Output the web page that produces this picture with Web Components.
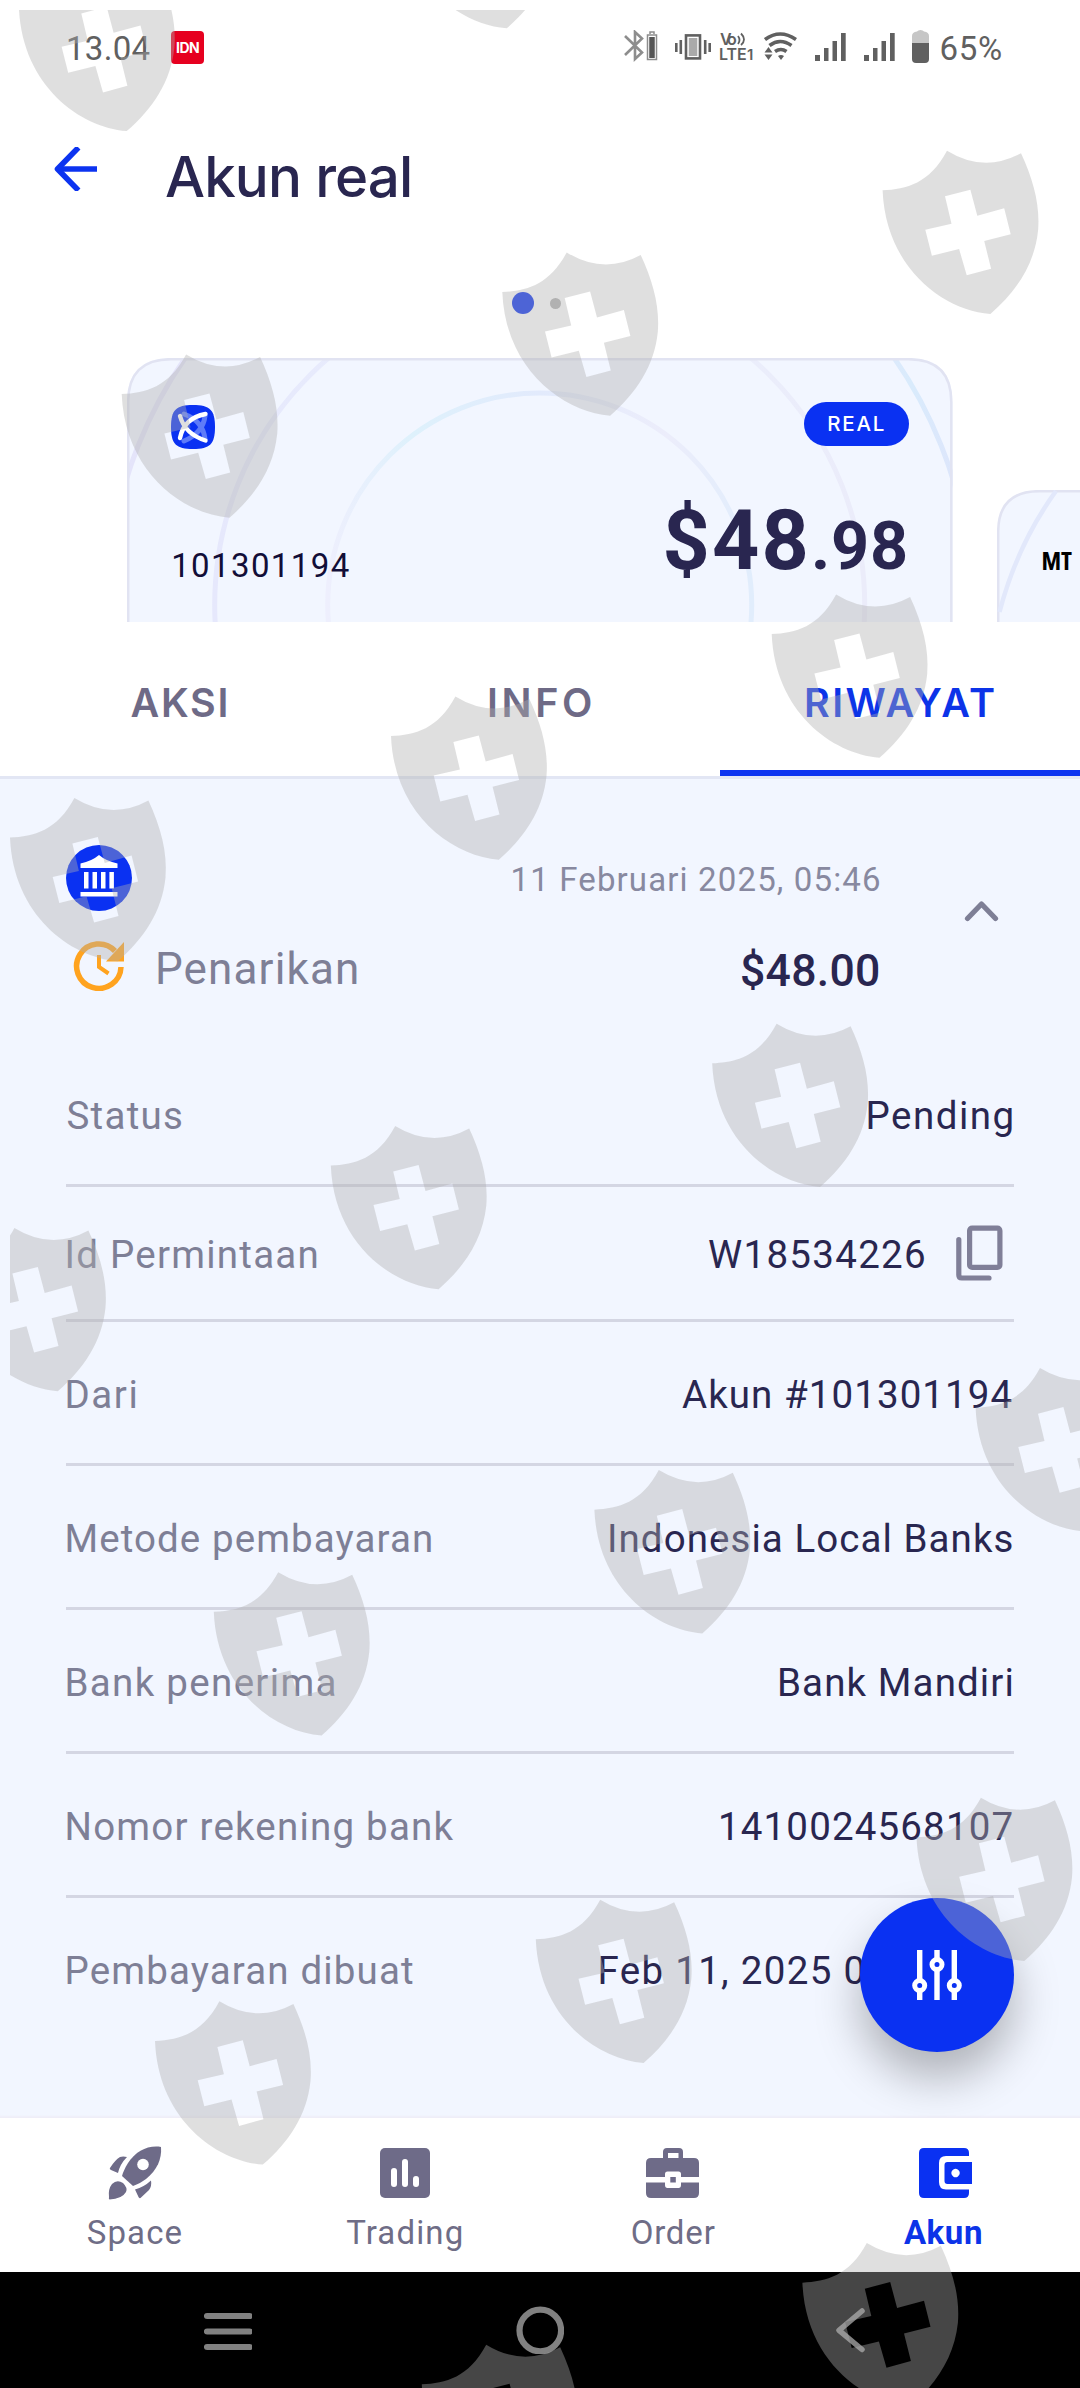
<!DOCTYPE html>
<html lang="id">
<head>
<meta charset="utf-8">
<title>Akun real</title>
<style>
html,body{margin:0;padding:0;background:#fff}
body{width:1080px;height:2388px;overflow:hidden;font-family:Roboto,"Noto Sans",sans-serif}
</style>
</head>
<body>
<account-app></account-app>
<script>
const define = (name, html, init) => customElements.define(name, class extends HTMLElement {
  constructor() {
    super();
    this.attachShadow({ mode: 'open' });
  }
  connectedCallback() {
    const a = n => this.getAttribute(n) || '';
    this.shadowRoot.innerHTML = typeof html === 'function' ? html(a) : html;
    if (init) init(this);
  }
});

/* Text whose visible glyphs span exactly `w` pixels, by tracking. */
const ctx = document.createElement('canvas').getContext('2d');
define('ink-text', a => `<style>
:host{display:inline-block;white-space:pre;flex:none;width:${a('w')}px}
span{display:inline-block;white-space:pre}
</style><span>${a('t')}</span>`, el => {
  const s = el.shadowRoot.querySelector('span'), c = getComputedStyle(s), t = el.getAttribute('t');
  ctx.font = `${c.fontWeight} ${c.fontSize} ${c.fontFamily}`;
  const m = ctx.measureText(t);
  const ink = m.actualBoundingBoxLeft + m.actualBoundingBoxRight;
  const ls = (parseFloat(el.getAttribute('w')) - ink) / (t.length - 1);
  s.style.letterSpacing = ls.toFixed(3) + 'px';
  s.style.marginLeft = m.actualBoundingBoxLeft.toFixed(2) + 'px';
  s.style.marginRight = '-30px';
});

define('status-bar', `<style>
:host{display:flex;align-items:center;height:97px;padding-left:68px;font-size:33px;line-height:40px;color:#606060;box-sizing:border-box}
svg{display:block;flex:none}
.idn{width:33px;height:33px;margin:-2px 0 0 21.5px;background:#e6001f;border-radius:4px;color:#fff;font:700 14px/33px Inter,sans-serif;display:flex;justify-content:center}
.volte{width:34px;height:29px;margin:-4px 0 0 9.5px;display:flex;flex-direction:column;font-family:Inter,sans-serif;font-weight:600}
.volte div{display:flex;height:14.5px;line-height:14.5px;font-size:16px}
.volte sup{font-size:15px;line-height:16px;vertical-align:baseline}
</style>
<ink-text w="81.5" t="13.04"></ink-text>
<div class="idn"><ink-text w="23" t="IDN"></ink-text></div>
<svg style="margin:-5px 0 0 419.5px" width="34" height="32" viewBox="0 0 34 32" fill="none" stroke="#8d8d8d" stroke-width="2.6"><path d="M1 6L18 22.5L11 29V2L18 8.5L1 25"/><path d="M23.5 5h9v24.5h-9z" stroke-width="1.5"/><path d="M26 4V2h4v2" stroke-width="1.5"/><path d="M28 7v21" stroke="#555" stroke-width="5.5"/></svg>
<svg style="margin:-4px 0 0 17px" width="36" height="26" viewBox="0 0 36 26" fill="none" stroke="#606060" stroke-width="2.6"><rect x="11" y="1.4" width="14" height="23"/><path d="M1.3 9v9M5.8 6v14M30.2 6v14M34.7 9v9"/><path fill="#aaa" stroke="none" d="M13.8 4h8.5v18h-8.5z"/></svg>
<div class="volte"><div><ink-text w="17" t="Vo"></ink-text><svg width="9" height="15" viewBox="0 0 9 15" fill="none" stroke="#606060" stroke-width="1.8"><path d="M1 4q3 4 0 8M4 1.5q6 6 0 11.5"/></svg></div><div><ink-text w="26" t="LTE"></ink-text><sup style="margin-left:1px">1</sup></div></div>
<svg style="margin:-4px 0 0 10px" width="33" height="29" viewBox="0 0 33 29" fill="none" stroke="#606060" stroke-width="3.6"><path d="M1 7.5Q16 -3.5 32 7.5M5.5 13.5Q16 5.5 27.5 13.5M11 19.5Q17 15.5 22.5 19.5"/><path stroke="none" fill="#606060" d="M4.5 15l4 5.5h-8zM4.5 28l4-5.5h-8zM17 28l-3-4q3-2 6 0z"/></svg>
<svg style="margin:-4px 0 0 17.5px" width="31" height="28" fill="#606060"><path d="M0 22h5v6H0zM9 15h4.5v13H9zM17.5 8h4.5v20h-4.5zM26 0h4.7v28H26z"/></svg>
<svg style="margin:-4px 0 0 18.5px" width="31" height="28" fill="#606060"><path d="M0 22h5v6H0zM9 15h4.5v13H9zM17.5 8h4.5v20h-4.5zM26 0h4.7v28H26z"/></svg>
<svg style="margin:-4px 0 0 17px" width="17" height="33"><path fill="#c6c6c6" d="M0 15V6q0-4 5-4.5Q6 0 8.5 0T12 1.5Q17 2 17 6v9z"/><path fill="#606060" d="M0 13h17v16q0 4-4 4H4q-4 0-4-4z"/></svg>
<ink-text style="margin-left:12.5px" w="59.5" t="65%"></ink-text>`);

define('page-header', a => `<style>
:host{display:flex;align-items:center;height:159px;padding-left:54px;box-sizing:border-box;color:#292650;font:500 56.5px/70px Inter,sans-serif}
svg{display:block;margin:-15px 69px 0 0}
</style>
<svg width="43" height="44" viewBox="0 0 43 44" fill="none" stroke="#0c33f0" stroke-width="5.6"><path d="M43 22H5"/><path d="M22.5 2.5L3.5 22L22.5 41.5" stroke-linecap="square" stroke-linejoin="round"/></svg>
<ink-text w="244" t="${a('heading')}"></ink-text>`);

define('page-dots', `<style>
:host{display:flex;align-items:center;height:22px;padding:36px 0 44px 512px}
i{display:block;border-radius:50%}
.on{width:22px;height:22px;background:#0c33f0;margin-right:16px}
.off{width:11px;height:11px;background:#b2b2b2}
</style><i class="on"></i><i class="off"></i>`);

define('account-card', `<style>
:host{display:grid;grid-template-columns:1fr;grid-template-rows:1fr;width:825.5px;height:264px;flex:none}
.bg,.body{grid-area:1/1}
svg{display:block}
.body{display:flex;justify-content:space-between;padding:44px 44px 0 44px}
.l,.r{display:flex;flex-direction:column}
.r{align-items:flex-end}
.logo{margin-top:3px}
.num{font-size:33px;line-height:40px;color:#120e38;margin:96.7px 0 0 2.2px}
.pill{display:flex;justify-content:center;width:105px;height:44px;border-radius:22px;background:#0a31f2;color:#fff;font:500 20.5px/44px Inter,sans-serif}
.sum{display:flex;align-items:baseline;color:#292650;font-weight:700;margin:49px 2.5px 0 0;line-height:92px}
.a{font-size:82.5px}.b{font-size:66.5px;margin-left:9.5px}
</style>
<svg class="bg" width="825.5" height="264" viewBox="0 0 825.5 264"><defs><linearGradient id="g" x1="0" x2="1" y1="0" y2="0"><stop offset="0" stop-color="#eeeffd"/><stop offset=".2" stop-color="#def1fc"/><stop offset=".5" stop-color="#e2eafc"/><stop offset=".8" stop-color="#ecedfb"/><stop offset="1" stop-color="#e1edfc"/></linearGradient>
<linearGradient id="h" x1="0" x2="1" y1="0" y2="0"><stop offset="0" stop-color="#e6e8fc"/><stop offset=".5" stop-color="#eaf0fd"/><stop offset="1" stop-color="#ebecfa"/></linearGradient>
<linearGradient id="k" x1="0" x2="1" y1="0" y2="0"><stop offset="0" stop-color="#e4e4fa"/><stop offset=".85" stop-color="#e6e7fa"/><stop offset=".93" stop-color="#d9ebfc"/><stop offset="1" stop-color="#dfe4fb"/></linearGradient><clipPath id="c"><path d="M0 264V44Q0 0 44 0H781.5Q825.5 0 825.5 44V264Z"/></clipPath></defs>
<g clip-path="url(#c)"><path fill="#f2f6ff" d="M0 0h826v264H0z"/><g fill="none" stroke-width="5"><circle cx="412.7" cy="247" r="212" stroke="url(#g)"/><circle cx="412.7" cy="247" r="325" stroke="url(#h)"/><circle cx="412.7" cy="247" r="432" stroke="url(#k)"/></g></g>
<path fill="none" stroke="#e1e3f2" stroke-width="2.5" d="M1.2 264V44Q1.2 1.2 44 1.2H781.5Q824.3 1.2 824.3 44V264"/></svg>
<div class="body"><div class="l">
<svg class="logo" width="44" height="44" viewBox="0 0 44 44" fill="none" stroke-linecap="round"><path fill="#0a31f2" d="M22 0C39 0 44 5 44 22S39 44 22 44 0 39 0 22 5 0 22 0Z"/><g stroke="#5e7bf8" stroke-width="5"><path d="M34 34Q32 16 13 9M34 11Q32 28 13 36"/></g><g stroke="#fff" stroke-width="4.4"><path d="M9 33Q13 13 34.5 9M9 11Q14 29 34.5 35.5"/></g></svg>
<div class="num"><ink-text w="175.5" t="101301194"></ink-text></div></div>
<div class="r"><div class="pill"><ink-text w="55.5" t="REAL"></ink-text></div>
<div class="sum"><ink-text class="a" w="140" t="$48"></ink-text><ink-text class="b" w="91" t=".98"></ink-text></div></div></div>`);

define('next-card', `<style>
:host{display:grid;width:84px;height:132px;margin:132px 0 0 44.5px;flex:none;overflow:hidden}
svg,div{grid-area:1/1}
div{padding:56px 0 0 44.5px;font:700 25.5px/28px "Open Sans",sans-serif;font-stretch:84%;color:#000;letter-spacing:-.3px}
</style><svg width="84" height="132" viewBox="0 0 84 132" fill="none"><path fill="#f2f6ff" stroke="#e1e3f2" stroke-width="2.5" d="M1.2 140V42Q1.2 1.2 42 1.2H110V140"/><path stroke="#e2e8fb" stroke-width="4.5" d="M59 1Q20 55 2.5 122"/></svg><div>MT</div>`);

define('account-carousel', `<style>:host{display:flex;height:264px;padding-left:127px;overflow:hidden}</style><account-card></account-card><next-card></next-card>`);

define('tab-item', a => `<style>
:host{display:flex;flex:1;justify-content:center;box-sizing:border-box;height:154px;padding-top:61px;font:600 39.5px/40px Inter,sans-serif;color:#6e6a86}
:host([active]){color:#0c33e8;border-bottom:6px solid #0c33f0}
</style><ink-text style="margin-right:${a('mr') || 0}px" w="${a('w')}" t="${a('label')}"></ink-text>`);
define('tab-bar', `<style>:host{display:flex;border-bottom:3px solid #e2e6f4}</style>
<tab-item label="AKSI" w="96" mr="3"></tab-item><tab-item label="INFO" w="102"></tab-item><tab-item active label="RIWAYAT" w="188"></tab-item>`);

define('history-head', `<style>
:host{display:flex;box-sizing:border-box;height:264px;padding:66px 66px 0}
svg{display:block}
.l{display:flex;flex-direction:column;flex:1}
.type{display:flex;align-items:center;margin-top:25px;padding-left:7px;color:#7e7f96;font-size:44px;line-height:52px}
.type ink-text{margin:7px 0 0 34px}
.r{display:flex;flex-direction:column;align-items:flex-end}
.date{font-size:33px;line-height:40px;color:#8889a0;margin-top:14.7px}
.amt{font-size:44.5px;font-weight:500;line-height:52px;color:#292650;margin-top:45.5px}
.chev{margin:55px 15px 0 85px}
</style>
<div class="l"><svg width="66" height="66" viewBox="0 0 66 66"><circle cx="33" cy="33" r="33" fill="#0a31f2"/><path fill="#fff" d="M33 10Q40 16 51.5 18.5V23H14.5V18.5Q26 16 33 10ZM18 27h4.5v16.5H18zM26.5 27H31v16.5h-4.5zM35 27h4.5v16.5H35zM43.4 27h4.5v16.5h-4.5zM14.5 47h37v4.5h-37z"/></svg>
<div class="type"><svg width="51" height="50" viewBox="0 0 51 50" fill="none" stroke="#ffa31f" stroke-width="5.5"><path d="M48 26A22.2 22.2 0 1 1 42 10"/><path d="M26 14v12l9.5 6.5" stroke-width="4"/><path fill="#ffa31f" stroke="none" d="M51 1v19.5H33z"/></svg><ink-text w="199" t="Penarikan"></ink-text></div></div>
<div class="r"><ink-text class="date" w="366.5" t="11 Februari 2025, 05:46"></ink-text><ink-text class="amt" w="137" t="$48.00"></ink-text></div>
<svg class="chev" width="35" height="22" viewBox="0 0 35 22" fill="none" stroke="#7e7f96" stroke-width="5.2" stroke-linecap="round"><path d="M3.5 18.5L17.5 4L31.5 18.5" stroke-linejoin="round"/></svg>`);

define('detail-row', a => `<style>
:host{display:flex;align-items:center;justify-content:space-between;box-sizing:border-box;height:144px;margin:0 66px;padding:4px 2.5px 0 1.5px;border-bottom:3px solid #d4d6e3;font-size:38.5px;line-height:46px;color:#7e7f96}
:host([last]){border-color:transparent}
:host([short]){height:135px;padding-right:11px}
.v{display:flex;align-items:center;color:#292650}
</style><ink-text w="${a('lw')}" t="${a('label')}"></ink-text><div class="v"><ink-text w="${a('vw')}" t="${a('value')}"></ink-text><slot></slot></div>`);

define('copy-icon', `<style>:host{display:block;margin-left:32px}svg{display:block;margin-top:-5px}</style><svg width="47" height="56" viewBox="0 0 47 56" fill="none" stroke="#807f98" stroke-width="5.2" stroke-linecap="round"><rect x="13.6" y="3.2" width="30.3" height="39.2" rx="2.5"/><path d="M2.8 14.5V50Q2.8 53 5.8 53H33"/></svg>`);

define('filter-button', `<style>:host{position:absolute;left:860px;top:1119px;width:154px;height:154px;border-radius:50%;background:#0a31f2;box-shadow:0 26px 46px rgba(0,0,0,.28)}svg{display:block}</style>
<svg width="154" height="154" viewBox="0 0 154 154" fill="none" stroke="#fff" stroke-width="5.4"><path d="M59.7 52v50M77 52v50M94.3 52v50"/><g fill="#0a31f2" stroke-width="5"><circle cx="59.7" cy="87.5" r="5"/><circle cx="77" cy="66.5" r="5"/><circle cx="94.3" cy="87.5" r="5"/></g></svg>`);

define('history-panel', `<style>:host{display:block;position:relative;height:1339px;background:#f2f6ff;overflow:hidden;box-shadow:inset 0 -3px 2px -1px #efeef8}</style>
<history-head></history-head>
<detail-row label="Status" lw="113.5" value="Pending" vw="143"></detail-row>
<detail-row short label="Id Permintaan" lw="249" value="W18534226" vw="215"><copy-icon></copy-icon></detail-row>
<detail-row label="Dari" lw="68" value="Akun #101301194" vw="329.5"></detail-row>
<detail-row label="Metode pembayaran" lw="363.5" value="Indonesia Local Banks" vw="401.5"></detail-row>
<detail-row label="Bank penerima" lw="267" value="Bank Mandiri" vw="231.5"></detail-row>
<detail-row label="Nomor rekening bank" lw="386" value="1410024568107" vw="290.5"></detail-row>
<detail-row last label="Pembayaran dibuat" lw="345.5" value="Feb 11, 2025 0" vw="263"><span style="width:148px"></span></detail-row>
<filter-button></filter-button>`);

const icons = {
  space: '<path d="M53 1C40 -1 28 5 20 17 17 22 15 26 14 30L25 40C30 38 34 36 38 33 49 24 54 13 53 1Z"/><circle cx="35" cy="18.5" r="5.8" fill="#fff"/><path d="M2 22Q7 14 12 11Q15 9.8 19 11Q12 18 10 27L3 24Q1 23 2 22ZM43 34.5Q44 40 41 44L32.5 52Q31 52.5 30.5 51L27 43.5Q36 41 43 34.5ZM1 51Q0 43 4 38Q9 33 15 37Q20 42 18 46Q14 53 1.5 53.5Q.5 53 1 51Z"/>',
  trading: '<rect x="2" y="2" width="50" height="50" rx="5"/><g fill="#fff"><rect x="13" y="22" width="6" height="19" rx="3"/><rect x="24" y="13" width="6" height="28" rx="3"/><rect x="35" y="30" width="6" height="11" rx="3"/></g>',
  order: '<path fill-rule="evenodd" d="M17 12V6Q17 2 21 2H33Q37 2 37 6V12H48Q53 12 53 17V31H35V28Q35 25.5 32.5 25.5H21.5Q19 25.5 19 28V31H0V17Q0 12 5 12ZM22 12H32.5V7H22ZM0 36.5H19V39Q19 42 21.5 42H32.5Q35 42 35 39V36.5H53V47Q53 52 48 52H5Q0 52 0 47Z"/><path d="M24.3 31h5.5v5.5h-5.5z"/>',
  wallet: '<path d="M6 2H45Q50 2 50 7V10H27Q20 10 20 17V36Q20 43.5 27 43.5H50V47Q50 52 45 52H5Q0 52 0 47V7Q0 2 5 2Z"/><path fill-rule="evenodd" d="M28.5 16H53V38H28.5Q25.5 38 25.5 35V19Q25.5 16 28.5 16ZM36.5 22.8A4.2 4.2 0 1 0 36.6 22.8Z"/>'
};
define('nav-item', a => `<style>
:host{display:flex;flex:1;flex-direction:column;align-items:center;padding-top:28px;color:#6f6d86;font-size:33px;line-height:40px}
:host([active]){color:#0c33e8;font-weight:700}
svg{display:block;margin-left:${a('dx') || 0}px;margin-bottom:12.7px;fill:#6e6b88;overflow:visible}
:host([active]) svg{fill:#0a31f2}
</style><svg width="54" height="54" viewBox="0 0 54 54">${icons[a('icon')]}</svg><ink-text w="${a('w')}" t="${a('label')}"></ink-text>`);
define('bottom-nav', `<style>:host{display:flex;height:154px;background:#fff;padding:0 3px 0 0;box-sizing:border-box}</style>
<nav-item icon="space" label="Space" w="94"></nav-item><nav-item icon="trading" label="Trading" w="115.5" dx="2"></nav-item><nav-item icon="order" label="Order" w="83"></nav-item><nav-item active icon="wallet" label="Akun" w="77" dx="8"></nav-item>`);

define('system-nav', `<style>:host{display:flex;align-items:center;height:116px;background:#000;padding-left:204px}svg{display:block;fill:none;stroke:#818181;stroke-width:6.2;stroke-linecap:round;stroke-linejoin:round}</style>
<svg width="48" height="48" viewBox="0 0 48 48"><path d="M3 10h42.5M3 25.5h42.5M3 41h42.5"/></svg>
<svg style="margin-left:264px" width="48" height="48" viewBox="0 0 48 48"><circle cx="24.3" cy="24.5" r="20.8"/></svg>
<svg style="margin-left:270px" width="32" height="48" viewBox="0 0 32 48"><path d="M28 5L5 24.3L28 43.5" stroke-width="5.5"/></svg>`);

/* Repeating shield pattern laid over the whole screen. */
define('shield-overlay', () => {
  const pts = [[18.9,7.4],[398.9,-95.4],[882.6,190.3],[502.3,292],[121.7,394],[771.7,634],[391,736],[10,837.5],[712.2,1063.3],[330.8,1165.5],[-50,1267.5],[975.6,1407.7],[594.4,1509.7],[213.8,1611.8],[916.5,1837.3],[535.8,1939.3],[155,2040.9],[802.4,2282.7],[421.8,2384.3]];
  return `<style>:host{display:block;position:absolute;inset:0;pointer-events:none}svg{display:block}</style>
<svg width="1080" height="2388" viewBox="0 0 1080 2388"><defs><clipPath id="page"><path d="M10 10H1080V2388H10Z"/></clipPath><path id="s" fill-rule="evenodd" d="M0 0C24 -1 47 -7 64.4 -39.6Q101.5 -16.9 138.4 -37C151 -10 157.5 15 155.5 40C152 74 134 101 107.8 123.7C60 120 3 77 0 0ZM62.4 6L87.8 -.6L94.7 25.4L121.6 18L128.1 44L101.6 50.7L108.5 78.4L84.1 85L76.5 58.7L49.3 65.4L42.7 39.4L68.9 33.4Z"/></defs>
<g fill="rgb(175,175,175)" fill-opacity=".4" clip-path="url(#page)">${pts.map(p => `<use href="#s" x="${p[0]}" y="${p[1]}"/>`).join('')}</g></svg>`;
});

define('account-app', `<style>:host{display:flex;flex-direction:column;position:relative;width:1080px;height:2388px;overflow:hidden;background:#fff}
:host>*{flex:none}</style>
<status-bar></status-bar><page-header heading="Akun real"></page-header><page-dots></page-dots><account-carousel></account-carousel><tab-bar></tab-bar><history-panel></history-panel><bottom-nav></bottom-nav><system-nav></system-nav><shield-overlay></shield-overlay>`);
</script>
</body>
</html>
